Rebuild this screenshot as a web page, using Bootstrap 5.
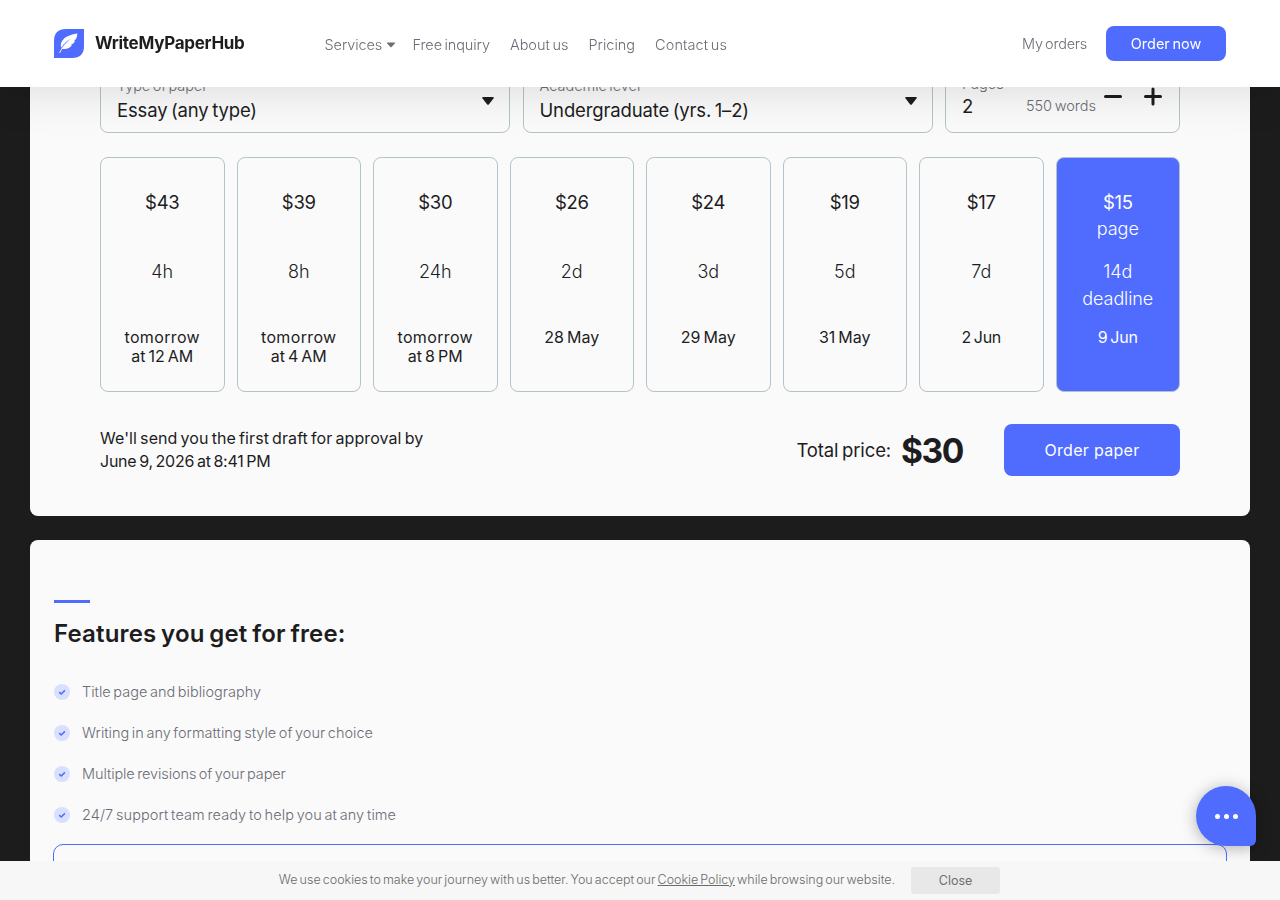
<!DOCTYPE html>
<html lang="en">
<head>
<meta charset="utf-8">
<meta name="viewport" content="width=device-width, initial-scale=1">
<title>WriteMyPaperHub</title>
<link href="https://cdn.jsdelivr.net/npm/bootstrap@5.3.0/dist/css/bootstrap.min.css" rel="stylesheet">
<style>
:root{--brand:#4f6cff;--ink:#1d1d1f;--muted:#6c6c76;--line:#b3c3cb}
body{background:#1c1c1c;color:var(--ink);font-family:"Inter","Liberation Sans",sans-serif;font-size:14.5px;word-spacing:-.1em;height:900px;overflow:hidden;line-height:24px}
.site-header{height:87px;box-shadow:0 0 50px rgba(0,0,0,.15);padding:0 54px}
.brand-name{font-size:17px;font-weight:700;letter-spacing:-.29px;margin-left:11px;line-height:28px;margin-top:-1px}
.site-header a{color:var(--muted);text-decoration:none;font-weight:300}
.site-header a.brand-link{color:var(--ink)}
.main-nav{margin-left:80px;gap:20px;padding-top:2px}
.main-nav a:first-child{width:71px;margin-right:-3px}
.btn-brand,.btn-brand:hover{background:var(--brand);color:#fff;border:0;border-radius:8px}
.site-header .btn-brand{width:120px;height:35px;font-size:14.5px;font-weight:400;color:#fff;line-height:35px;padding:0;margin-left:19px}
.track-a{letter-spacing:-.1px}
.track-b{letter-spacing:-.25px}
.track-wide{letter-spacing:.08px}
.page-body{padding:60px 30px 0}
.panel{background:#fafafa;border-radius:8px}
.calc{height:456px;padding:0 70px;margin-bottom:24px}
.field{border:1px solid var(--line);border-radius:8px;height:73px;padding:15px 15px 0 16px}
.field-label{font-weight:300;color:var(--muted);line-height:20px}
.field-value{font-size:18.5px;line-height:28px;letter-spacing:-.15px}
.field-select{width:410px}
.field-select svg{margin-top:21px}
.field-pages{width:235px;padding:14px 16px 0}
.field-pages .field-label{line-height:18px}
.field-pages .field-value{line-height:26px}
.words{font-weight:300;color:var(--muted);margin-top:19px}
.steps{margin:12px 0 0 7px}
.deadlines{gap:12px;margin-top:24px}
.deadline{flex:1 1 0;height:235px;border:1px solid var(--line);border-radius:8px;text-align:center;padding-top:30px;font-size:18px;line-height:28px}
.deadline .price{font-size:18.5px;font-weight:430;height:27px;letter-spacing:-.3px}
.deadline .unit{font-weight:300;height:28px}
.deadline .term{font-weight:300;height:27px;margin-top:15px}
.deadline .due{font-size:16px;font-weight:440;line-height:19px;margin-top:15px}
.deadline.active{background:var(--brand);color:#fff}
.stretch{letter-spacing:.35px}
.summary{margin-top:32px;height:52px}
.summary-note{font-size:16px;font-weight:370;line-height:23px}
.total-label{font-size:18.5px;letter-spacing:-.12px}
.total-sum{font-size:33.5px;font-weight:680;letter-spacing:-1.4px;margin:0 41px 0 10px;line-height:52px;padding-top:2px}
.btn-order{width:176px;height:52px;font-size:16px;letter-spacing:.3px}
.features{height:400px;padding:60px 24px 0}
.accent{width:36px;height:3px;background:var(--brand)}
.features h2{font-size:24px;font-weight:570;line-height:32px;letter-spacing:.16px;margin:15px 0 30px}
.features li{height:24px;margin-bottom:17px;gap:12px;color:var(--muted);font-weight:300}
.promo{border:1px solid var(--brand);border-radius:10px;height:80px;margin:0 -1px}
.cookie-bar{height:39px;background:#f7f7f7;color:#6a6a6a;font-size:12.5px;font-weight:300;gap:16px;padding-right:1px}
.cookie-bar span{margin-top:-2px}
.cookie-bar a{color:inherit}
.btn-close-bar{width:89px;height:27px;background:#e8e8e8;color:#6f6f6f;font-size:12.5px;font-weight:400;border:0;border-radius:3px;padding:0;line-height:28px}
.chat{width:60px;height:60px;right:24px;bottom:54px;background:var(--brand);border-radius:30px 30px 6px 30px;box-shadow:0 2px 16px rgba(0,0,0,.3);gap:4px;z-index:1020}
.chat i{width:5px;height:5px;border-radius:50%;background:#fff}
</style>
</head>
<body>
<header class="site-header fixed-top bg-white d-flex align-items-center">
  <a class="brand-link d-flex align-items-center" href="#">
    <svg width="30" height="29" viewBox="0 0 30 29"><path d="M0 29V12Q0 0 12 0H30V17Q30 29 18 29Z" fill="#4f6cff"/><path d="M23.3 4.5C15 5.500 8.600 9 7.100 14.200C6.600 16 6.900 17.500 7.300 18.700C10 14.500 13.500 11.500 16.500 9.700C12.500 13 8 17.800 5.100 23.700L6 24C6.700 22.400 7.500 20.900 8.300 19.900C13 20.700 16 18.700 17.900 15.900L16.700 15.700C18.600 15.200 20 14 21 12.300L19.800 12.200C22.300 10.700 23.300 7.500 23.300 4.500Z" fill="#fff"/></svg>
    <span class="brand-name">WriteMyPaperHub</span>
  </a>
  <nav class="main-nav d-flex">
    <a href="#" class="d-flex align-items-center justify-content-between flex-shrink-0 track-a"><span>Services</span><svg width="10" height="6" viewBox="0 0 10 6"><path d="M1.500.5h7q1 0 .4.700L5.600 4.900q-.6.600-1.200 0L1.100 1.200Q.5.500 1.500.5Z" fill="#6c6c76"/></svg></a>
    <a href="#" class="track-a">Free inquiry</a><a href="#">About us</a><a href="#">Pricing</a><a href="#" class="track-wide">Contact us</a>
  </nav>
  <a href="#" class="ms-auto track-b">My orders</a>
  <a href="#" class="btn btn-brand">Order now</a>
</header>

<main class="page-body">
  <section class="panel calc">
    <div class="d-flex justify-content-between">
      <div class="field field-select d-flex justify-content-between">
        <div><div class="field-label track-a">Type of paper</div><div class="field-value track-b">Essay (any type)</div></div>
        <svg width="12" height="8" viewBox="0 0 12 8"><path d="M1 0h10q1.400 0 .6 1.200L7 7.200Q6 8.500 5 7.200L.4 1.200Q-.4 0 1 0Z" fill="#1d1d1f"/></svg>
      </div>
      <div class="field field-select d-flex justify-content-between">
        <div><div class="field-label">Academic level</div><div class="field-value">Undergraduate (yrs. 1–2)</div></div>
        <svg width="12" height="8" viewBox="0 0 12 8"><path d="M1 0h10q1.400 0 .6 1.200L7 7.200Q6 8.500 5 7.200L.4 1.200Q-.4 0 1 0Z" fill="#1d1d1f"/></svg>
      </div>
      <div class="field field-pages d-flex">
        <div><div class="field-label">Pages</div><div class="field-value">2</div></div>
        <div class="words ms-auto">550 words</div>
        <svg width="60" height="20" viewBox="0 0 60 20" class="steps flex-shrink-0" fill="none" stroke="#1d1d1f" stroke-width="3" stroke-linecap="round"><path d="M2.500 9.500h15M42.500 9.500h15M50 2v15"/></svg>
      </div>
    </div>

    <div class="deadlines d-flex">
      <div class="deadline"><div class="price">$43</div><div class="unit"></div><div class="term">4h</div><div class="unit"></div><div class="due"><span class="stretch">tomorrow</span><br>at 12 AM</div></div>
      <div class="deadline"><div class="price">$39</div><div class="unit"></div><div class="term">8h</div><div class="unit"></div><div class="due"><span class="stretch">tomorrow</span><br>at 4 AM</div></div>
      <div class="deadline"><div class="price">$30</div><div class="unit"></div><div class="term">24h</div><div class="unit"></div><div class="due"><span class="stretch">tomorrow</span><br>at 8 PM</div></div>
      <div class="deadline"><div class="price">$26</div><div class="unit"></div><div class="term">2d</div><div class="unit"></div><div class="due">28 May</div></div>
      <div class="deadline"><div class="price">$24</div><div class="unit"></div><div class="term">3d</div><div class="unit"></div><div class="due">29 May</div></div>
      <div class="deadline"><div class="price">$19</div><div class="unit"></div><div class="term">5d</div><div class="unit"></div><div class="due">31 May</div></div>
      <div class="deadline"><div class="price">$17</div><div class="unit"></div><div class="term">7d</div><div class="unit"></div><div class="due track-b">2 Jun</div></div>
      <div class="deadline active"><div class="price">$15</div><div class="unit">page</div><div class="term">14d</div><div class="unit track-a">deadline</div><div class="due track-b">9 Jun</div></div>
    </div>

    <div class="summary d-flex align-items-center">
      <div class="summary-note me-auto"><div class="track-wide">We'll send you the first draft for approval by</div><div class="track-b">June 9, 2026 at 8:41 PM</div></div>
      <span class="total-label">Total price:</span>
      <span class="total-sum">$30</span>
      <button class="btn btn-brand btn-order">Order paper</button>
    </div>
  </section>

  <section class="panel features">
    <div class="accent"></div>
    <h2>Features you get for free:</h2>
    <ul class="list-unstyled mb-0">
      <li class="d-flex align-items-center"><svg width="16" height="16" viewBox="0 0 16 16"><circle cx="8" cy="8" r="8" fill="#d9dfff"/><path d="M5.200 8.100l2 1.900 3.700-3.600" fill="none" stroke="#4f6cff" stroke-width="1.500"/></svg>Title page and bibliography</li>
      <li class="d-flex align-items-center"><svg width="16" height="16" viewBox="0 0 16 16"><circle cx="8" cy="8" r="8" fill="#d9dfff"/><path d="M5.200 8.100l2 1.900 3.700-3.600" fill="none" stroke="#4f6cff" stroke-width="1.500"/></svg>Writing in any formatting style of your choice</li>
      <li class="d-flex align-items-center"><svg width="16" height="16" viewBox="0 0 16 16"><circle cx="8" cy="8" r="8" fill="#d9dfff"/><path d="M5.200 8.100l2 1.900 3.700-3.600" fill="none" stroke="#4f6cff" stroke-width="1.500"/></svg><span class="track-a">Multiple revisions of your paper</span></li>
      <li class="d-flex align-items-center"><svg width="16" height="16" viewBox="0 0 16 16"><circle cx="8" cy="8" r="8" fill="#d9dfff"/><path d="M5.200 8.100l2 1.900 3.700-3.600" fill="none" stroke="#4f6cff" stroke-width="1.500"/></svg><span class="track-wide">24/7 support team ready to help you at any time</span></li>
    </ul>
    <div class="promo"></div>
  </section>
</main>

<button class="chat btn p-0 border-0 position-fixed d-flex align-items-center justify-content-center" aria-label="Chat"><i></i><i></i><i></i></button>

<div class="cookie-bar fixed-bottom d-flex align-items-center justify-content-center">
  <span>We use cookies to make your journey with us better. You accept our <a href="#">Cookie Policy</a> while browsing our website.</span>
  <button class="btn btn-close-bar">Close</button>
</div>
<script src="https://cdn.jsdelivr.net/npm/bootstrap@5.3.0/dist/js/bootstrap.bundle.min.js"></script>
</body>
</html>
